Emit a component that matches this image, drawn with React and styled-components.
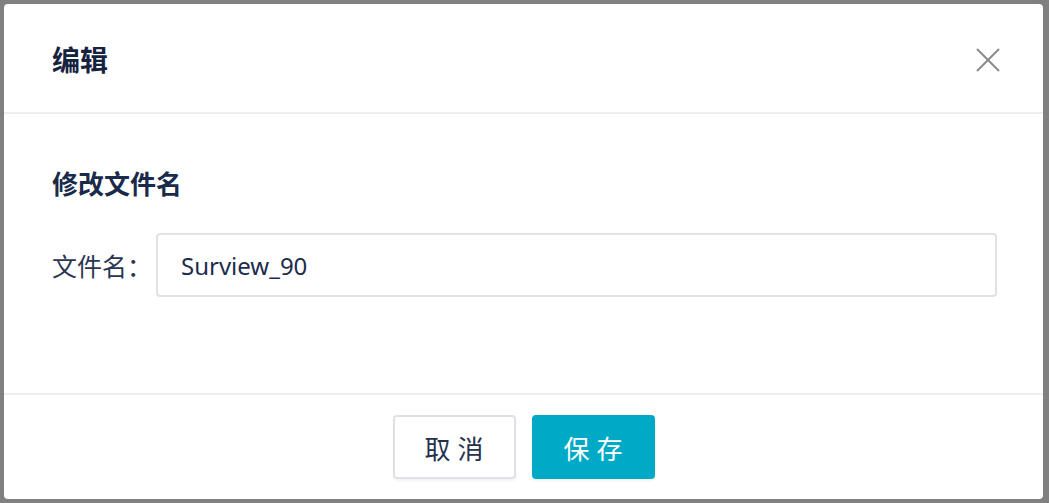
import React from "react";
import styled, { createGlobalStyle } from "styled-components";

const GlobalStyle = createGlobalStyle`
  html, body {
    margin: 0;
    padding: 0;
    background: #808080;
  }
  body {
    font-family: "Noto Sans", "Noto Sans CJK SC", sans-serif;
  }
`;

const Overlay = styled.div`
  width: 1049px;
  height: 503px;
  box-sizing: border-box;
  padding: 4px 6px 4px 4px;
  background: #808080;
  display: flex;
`;

const Dialog = styled.div`
  flex: 1;
  background: #ffffff;
  border-radius: 4px;
  display: flex;
  flex-direction: column;
  overflow: hidden;
`;

const Header = styled.div`
  height: 110px;
  flex-shrink: 0;
  box-sizing: border-box;
  padding: 0 43px 0 48px;
  display: flex;
  align-items: center;
  justify-content: space-between;
  border-bottom: 2px solid #eeeeee;
`;

const Title = styled.h2`
  margin: 0;
  font-size: 28px;
  font-weight: 700;
  color: #15233f;
  font-family: "Noto Sans CJK SC", sans-serif;
  line-height: 34px;
  padding-top: 2px;
`;

const CloseButton = styled.button`
  width: 24px;
  height: 24px;
  padding: 0;
  border: 0;
  background: transparent;
  cursor: pointer;
  display: flex;
  align-items: center;
  justify-content: center;
  margin-top: 4px;
`;

const Body = styled.div`
  height: 281px;
  flex-shrink: 0;
  box-sizing: border-box;
  padding: 54px 46px 0 48px;
  border-bottom: 2px solid #eeeeee;
`;

const SectionTitle = styled.h3`
  margin: 0 0 35px;
  font-size: 26px;
  font-weight: 700;
  color: #1a2a4a;
  line-height: 30px;
  font-family: "Noto Sans CJK SC", sans-serif;
`;

const Row = styled.div`
  display: flex;
  align-items: center;
`;

const Label = styled.label`
  width: 104px;
  flex-shrink: 0;
  font-size: 25px;
  color: #2a3552;
  font-family: "Noto Sans CJK SC", sans-serif;
  white-space: nowrap;
`;

const Input = styled.input`
  flex: 1;
  height: 64px;
  box-sizing: border-box;
  border: 2px solid #e1e1e8;
  border-radius: 4px;
  padding: 0 23px;
  font-size: 24px;
  color: #1d2b4c;
  font-family: "Noto Sans", "Noto Sans CJK SC", sans-serif;
  outline: none;
`;

const Footer = styled.div`
  flex: 1;
  display: flex;
  justify-content: center;
  align-items: flex-start;
  gap: 16px;
  padding-top: 20px;
`;

const Button = styled.button`
  width: 123px;
  height: 64px;
  padding: 0;
  border-radius: 4px;
  box-sizing: border-box;
  font-size: 26px;
  letter-spacing: 7px;
  text-indent: 7px;
  font-family: "Noto Sans CJK SC", sans-serif;
  cursor: pointer;
  border: 2px solid ${(p) => (p.$primary ? "#00aac6" : "#e0e1e8")};
  background: ${(p) => (p.$primary ? "#00aac6" : "#ffffff")};
  color: ${(p) => (p.$primary ? "#ffffff" : "#25304d")};
  box-shadow: 0 2px 3px rgba(0, 0, 0, 0.05);
`;

export default function App() {
  const [name, setName] = React.useState("Surview_90");
  return (
    <>
      <GlobalStyle />
      <Overlay>
        <Dialog>
          <Header>
            <Title>编辑</Title>
            <CloseButton aria-label="close">
              <svg width="24" height="24" viewBox="0 0 24 24">
                <path
                  d="M1 1 L23 23 M23 1 L1 23"
                  stroke="#8a8a8a"
                  strokeWidth="2"
                  fill="none"
                />
              </svg>
            </CloseButton>
          </Header>
          <Body>
            <SectionTitle>修改文件名</SectionTitle>
            <Row>
              <Label>文件名：</Label>
              <Input value={name} onChange={(e) => setName(e.target.value)} />
            </Row>
          </Body>
          <Footer>
            <Button>取消</Button>
            <Button $primary>保存</Button>
          </Footer>
        </Dialog>
      </Overlay>
    </>
  );
}
